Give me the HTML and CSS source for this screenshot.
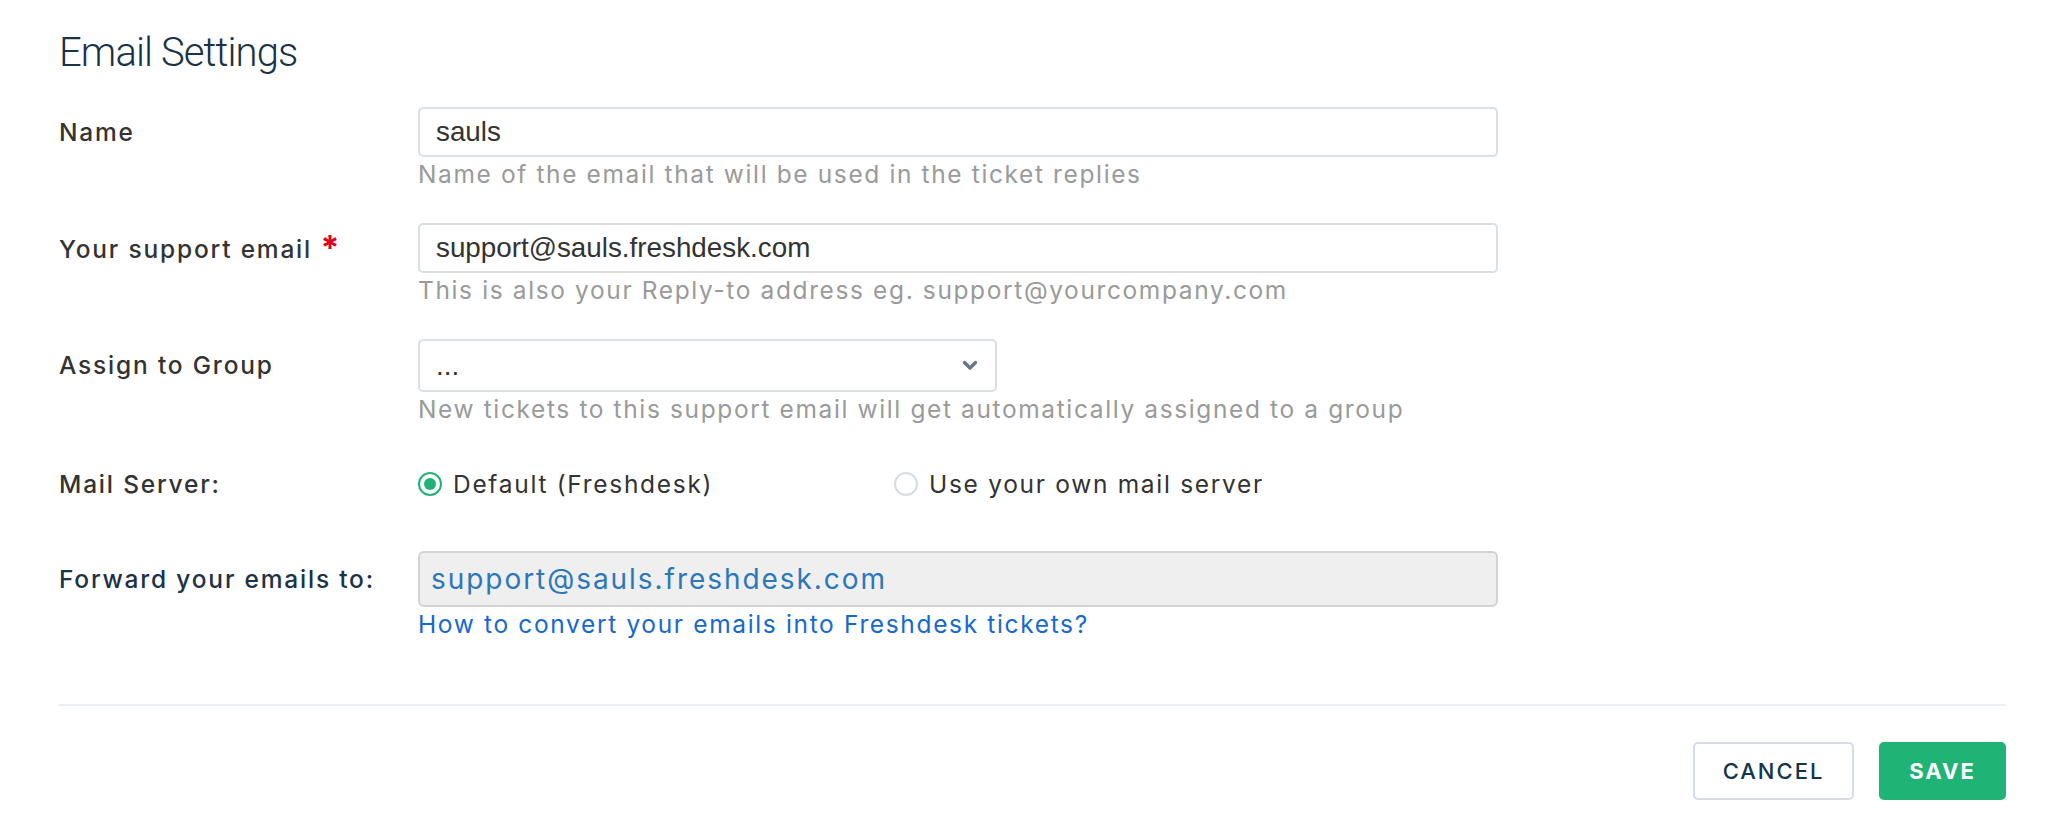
FILE: index.html
```html
<!DOCTYPE html>
<html lang="en">
<head>
<meta charset="utf-8">
<title>Email Settings</title>
<link rel="stylesheet" href="styles.css">
</head>
<body>
<div class="page">
  <h1 class="title">Email Settings</h1>
  <form class="form">
    <div class="row">
      <label class="label label-input">Name</label>
      <div class="field">
        <div class="input"><span class="input-text">sauls</span></div>
        <div class="hint">Name of the email that will be used in the ticket replies</div>
      </div>
    </div>
    <div class="row">
      <label class="label label-input">Your support email <span class="req">*</span></label>
      <div class="field">
        <div class="input"><span class="input-text">support@sauls.freshdesk.com</span></div>
        <div class="hint">This is also your Reply-to address eg. support@yourcompany.com</div>
      </div>
    </div>
    <div class="row">
      <label class="label label-select">Assign to Group</label>
      <div class="field">
        <div class="select">
          <span class="input-text">...</span>
          <svg class="chevron" width="16" height="11" viewBox="0 0 16 11"><path d="M2.5 2.5 L8 8 L13.5 2.5" fill="none" stroke="#65788b" stroke-width="3.4" stroke-linecap="round" stroke-linejoin="round"/></svg>
        </div>
        <div class="hint">New tickets to this support email will get automatically assigned to a group</div>
      </div>
    </div>
    <div class="row row-mail">
      <label class="label label-plain">Mail Server:</label>
      <div class="radios">
        <div class="radio-opt"><span class="radio radio-on"></span><span class="radio-text">Default (Freshdesk)</span></div>
        <div class="radio-opt"><span class="radio"></span><span class="radio-text">Use your own mail server</span></div>
      </div>
    </div>
    <div class="row row-forward">
      <label class="label label-forward">Forward your emails to:</label>
      <div class="field">
        <div class="readonly">support@sauls.freshdesk.com</div>
        <a class="help-link" href="#">How to convert your emails into Freshdesk tickets?</a>
      </div>
    </div>
  </form>
  <div class="divider"></div>
  <div class="actions">
    <button class="btn btn-cancel" type="button">CANCEL</button>
    <button class="btn btn-save" type="button">SAVE</button>
  </div>
</div>
</body>
</html>
```
FILE: styles.css
```css
html, body {
  margin: 0;
  padding: 0;
  background: #ffffff;
}

.page {
  padding: 29px 56px 0 59px;
  font-family: "Inter", "Liberation Sans", sans-serif;
  color: #333333;
}

.title {
  margin: 0;
  font-family: "Roboto", "Liberation Sans", sans-serif;
  font-weight: 300;
  font-size: 40px;
  line-height: 48px;
  letter-spacing: -0.9px;
  color: #183247;
}

.form {
  margin-top: 30px;
  display: flex;
  flex-direction: column;
  gap: 32px;
}

.row {
  display: grid;
  grid-template-columns: 359px 1080px;
  align-items: start;
}

.label {
  font-size: 24.5px;
  font-weight: 500;
  letter-spacing: 1.8px;
  color: #333333;
}

.label-input { line-height: 50px; }
.label-select { line-height: 53px; }
.label-plain { line-height: 34px; }
.label-forward { line-height: 56px; color: #1c3247; }

.req {
  color: #e1001d;
  font-weight: 700;
  font-size: 34px;
  letter-spacing: 0;
  vertical-align: -2px;
}

.field {
  display: flex;
  flex-direction: column;
}

.input,
.select {
  box-sizing: border-box;
  height: 50px;
  border: 2px solid #d9dfe3;
  border-radius: 5px;
  padding: 0 16px;
  display: flex;
  align-items: center;
  background: #ffffff;
}

.select {
  width: 579px;
  height: 53px;
  justify-content: space-between;
  padding-right: 17px;
}

.input-text {
  font-family: "Liberation Sans", Arial, sans-serif;
  font-size: 27.8px;
  color: #333333;
}

.chevron {
  display: block;
}

.hint {
  font-size: 24.5px;
  line-height: 34px;
  letter-spacing: 1.62px;
  color: #9a9a9a;
}

.row-mail {
  margin-top: 9px;
}

.radios {
  display: flex;
  align-items: center;
  height: 34px;
}

.radio-opt {
  display: flex;
  align-items: center;
  gap: 11px;
  width: 476px;
}

.radio {
  box-sizing: border-box;
  width: 24px;
  height: 24px;
  border-radius: 50%;
  border: 2px solid #d5dce2;
  background: #ffffff;
  display: flex;
  align-items: center;
  justify-content: center;
}

.radio-on {
  border-color: #1fb475;
}

.radio-on::after {
  content: "";
  width: 12px;
  height: 12px;
  border-radius: 50%;
  background: #1fb475;
}

.radio-text {
  font-size: 24.5px;
  line-height: 34px;
  letter-spacing: 1.7px;
  color: #333333;
}

.row-forward {
  margin-top: 18px;
}

.readonly {
  box-sizing: border-box;
  height: 56px;
  border: 2px solid #d3d3d3;
  border-radius: 6px;
  background: #efefef;
  padding: 0 11px;
  display: flex;
  align-items: center;
  font-size: 28px;
  letter-spacing: 1.95px;
  color: #2b78b9;
}

.help-link {
  font-size: 24.5px;
  line-height: 34px;
  letter-spacing: 1.65px;
  color: #1669cc;
  text-decoration: none;
  align-self: flex-start;
}

.divider {
  margin-top: 63px;
  height: 2px;
  background: #ebeff3;
}

.actions {
  margin-top: 36px;
  display: flex;
  justify-content: flex-end;
  gap: 25px;
}

.btn {
  box-sizing: border-box;
  height: 58px;
  border-radius: 5px;
  font-family: "Inter", "Liberation Sans", sans-serif;
  font-size: 22px;
  letter-spacing: 2px;
  display: flex;
  align-items: center;
  justify-content: center;
  padding: 0;
  cursor: pointer;
}

.btn-cancel {
  width: 161px;
  background: #ffffff;
  border: 2px solid #d7dde4;
  color: #12344d;
  font-weight: 500;
}

.btn-save {
  width: 127px;
  background: #1fb475;
  border: 2px solid #1fb475;
  color: #ffffff;
  font-weight: 700;
}
```
